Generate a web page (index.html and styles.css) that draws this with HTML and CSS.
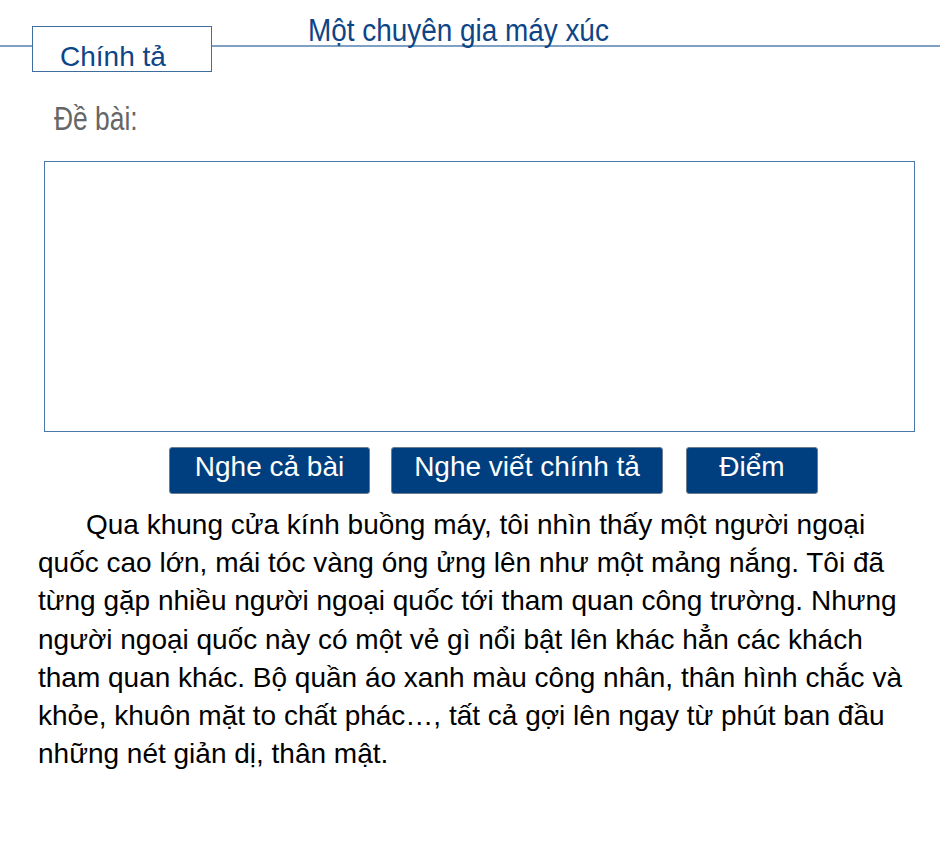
FILE: index.html
```html
<!DOCTYPE html>
<html lang="vi">
<head>
<meta charset="utf-8">
<title>Chính tả</title>
<link rel="stylesheet" href="styles.css">
</head>
<body>
<header class="top">
  <div class="tab">Chính tả</div>
  <h1 class="title">Một chuyên gia máy xúc</h1>
</header>
<main class="content">
  <div class="label">Đề bài:</div>
  <textarea class="answer"></textarea>
  <div class="actions">
    <button class="btn btn-1">Nghe cả bài</button>
    <button class="btn btn-2">Nghe viết chính tả</button>
    <button class="btn btn-3">Điểm</button>
  </div>
  <p class="text">Qua khung cửa kính buồng máy, tôi nhìn thấy một người ngoại quốc cao lớn, mái tóc vàng óng ửng lên như một mảng nắng. Tôi đã từng gặp nhiều người ngoại quốc tới tham quan công trường. Nhưng người ngoại quốc này có một vẻ gì nổi bật lên khác hẳn các khách tham quan khác. Bộ quần áo xanh màu công nhân, thân hình chắc và khỏe, khuôn mặt to chất phác…, tất cả gợi lên ngay từ phút ban đầu những nét giản dị, thân mật.</p>
</main>
</body>
</html>
```
FILE: styles.css
```css
* { box-sizing: border-box; }
html, body { margin: 0; padding: 0; background: #fff; }
body {
  width: 940px;
  height: 846px;
  overflow: hidden;
  font-family: "Liberation Sans", Arial, sans-serif;
}
.top {
  height: 72px;
  display: flex;
  align-items: flex-start;
  background: linear-gradient(#fff 45px, #7f9fc3 45px, #7f9fc3 47px, #fff 47px);
}
.tab {
  margin: 26px 0 0 32px;
  width: 180px;
  height: 46px;
  border: 1px solid #3f6d9e;
  background: #fff;
  color: #0d4586;
  font-size: 28px;
  line-height: 28px;
  padding: 16px 0 0 27px;
  white-space: nowrap;
}
.title {
  margin: 15px 0 0 96px;
  font-weight: normal;
  font-size: 31px;
  line-height: 32px;
  color: #0d4586;
  transform: scaleX(0.9);
  transform-origin: left center;
  white-space: nowrap;
}
.content { padding: 0 0 0 44px; }
.label {
  margin: 30px 0 0 10px;
  font-size: 33px;
  line-height: 34px;
  color: #666;
  transform: scaleX(0.8);
  transform-origin: left center;
  white-space: nowrap;
}
.answer {
  display: block;
  margin-top: 25px;
  width: 871px;
  height: 271px;
  border: 1px solid #4b78a8;
  resize: none;
  outline: none;
  padding: 0;
  font: inherit;
}
.actions {
  display: flex;
  margin: 15px 0 0 125px;
}
.btn {
  height: 47px;
  background: #003f7f;
  border: 1px solid #6b7c8f;
  border-radius: 3px;
  color: #fff;
  font-family: "Liberation Sans", Arial, sans-serif;
  font-size: 28px;
  line-height: 32px;
  padding: 0 0 8px;
  cursor: pointer;
  white-space: nowrap;
}
.btn-1 { width: 201px; }
.btn-2 { width: 272px; margin-left: 21px; }
.btn-3 { width: 132px; margin-left: 23px; }
.text {
  margin: 12px 0 0 -6px;
  width: 880px;
  font-size: 28px;
  line-height: 38.2px;
  text-indent: 48px;
  color: #000;
}
```
